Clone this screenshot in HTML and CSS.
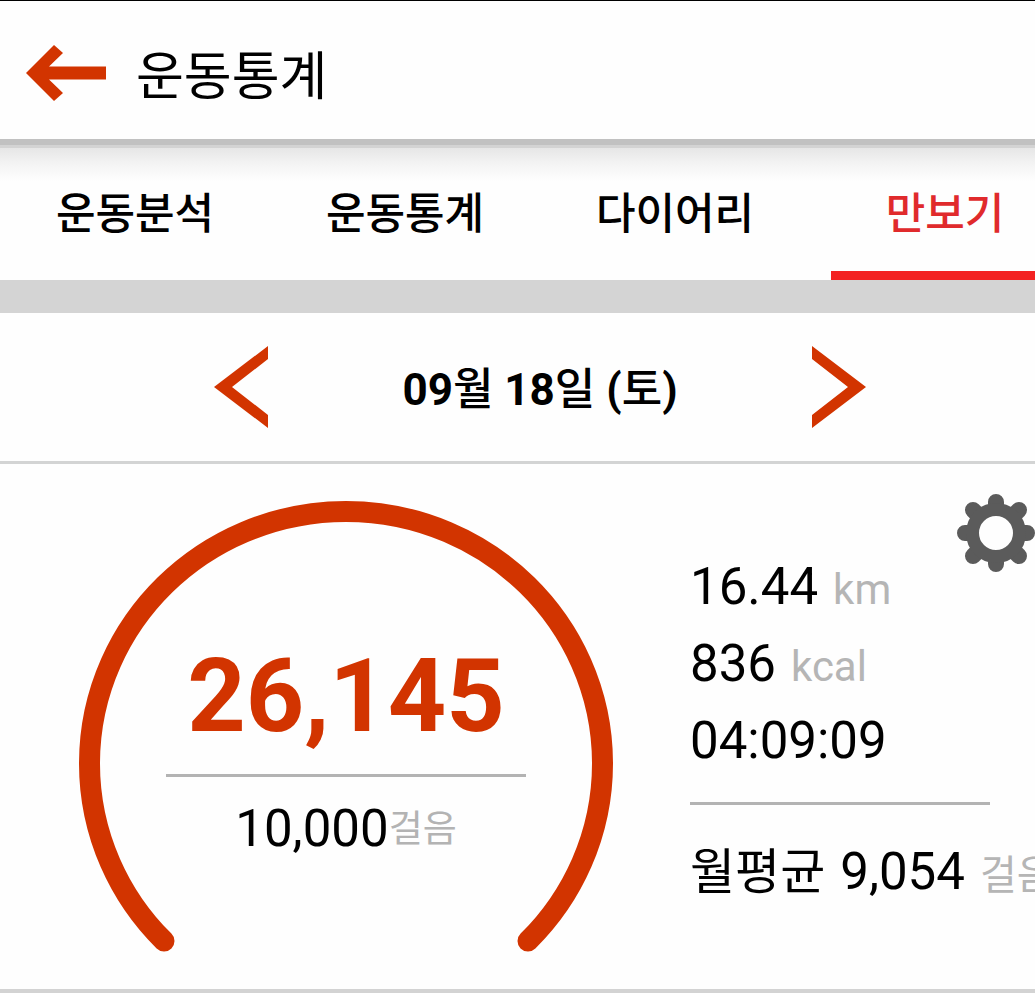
FILE: index.html
```html
<!DOCTYPE html>
<html lang="ko">
<head>
  <meta charset="UTF-8">
  <meta name="viewport" content="width=device-width, initial-scale=1.0">
  <title>운동통계</title>
  <link rel="stylesheet" href="styles.css">
</head>
<body>
<header class="header">
  <button class="icon-button" type="button" aria-label="뒤로">
    <svg width="80" height="58" viewBox="0 0 80 58">
      <path d="M0 29 28 1 37 9 23 22.500H80V35.500H23L37 49 28 57Z" fill="#d23400"/>
    </svg>
  </button>
  <h1>운동통계</h1>
</header>

<nav class="tabs">
  <a href="#analysis">운동분석</a>
  <a href="#stats">운동통계</a>
  <a href="#diary">다이어리</a>
  <a class="active" href="#pedometer">만보기</a>
</nav>

<section class="date-bar">
  <button class="icon-button" type="button" aria-label="이전 날짜">
    <svg width="54" height="82" viewBox="0 0 54 82">
      <path d="M0 41 54 0V13L18 41 54 69V82Z" fill="#d23400"/>
    </svg>
  </button>
  <h2>09<span>월</span> 18<span>일</span> (<span>토</span>)</h2>
  <button class="icon-button" type="button" aria-label="다음 날짜">
    <svg width="54" height="82" viewBox="0 0 54 82">
      <path d="M54 41 0 0V13L36 41 0 69V82Z" fill="#d23400"/>
    </svg>
  </button>
</section>

<main class="pedometer" id="pedometer">
  <div class="gauge">
    <svg class="gauge-ring" width="534" height="452" viewBox="0 0 534 452">
      <path d="M85 441A256.500 252 0 1 1 449 441" fill="none" stroke="#d23400" stroke-width="21" stroke-linecap="round"/>
    </svg>
    <div class="steps">
      <p class="steps-count">26,145</p>
      <p class="steps-goal">10,000<span>걸음</span></p>
    </div>
  </div>

  <div class="stats">
    <p>16.44 <span class="unit">km</span></p>
    <p>836 <span class="unit">kcal</span></p>
    <p>04:09:09</p>
    <p class="average"><span class="label">월평균</span> 9,054 <span class="unit">걸음</span></p>
  </div>

  <button class="icon-button settings" type="button" aria-label="설정">
    <svg width="78" height="78" viewBox="0 0 78 78">
      <path d="M39 8V14M39 64V70M8 39H14M64 39H70M16 16 20 20M58 58 62 62M62 16 58 20M20 58 16 62" stroke="#5b5b5b" stroke-width="16" stroke-linecap="round"/>
      <circle cx="39" cy="39" r="23.500" fill="none" stroke="#5b5b5b" stroke-width="13"/>
    </svg>
  </button>
</main>
</body>
</html>
```

FILE: styles.css
```css
* {
  box-sizing: border-box;
}

body {
  margin: 0;
  background-color: #fefefe;
  color: #000;
  font-family: Roboto, "Noto Sans CJK KR", sans-serif;
  overflow-x: hidden;
}

h1, h2, p {
  margin: 0;
}

.icon-button {
  padding: 0;
  border: none;
  background: none;
  cursor: pointer;
}

.icon-button svg {
  display: block;
}

/* Header */
.header {
  display: flex;
  align-items: center;
  gap: 30px;
  height: 145px;
  padding: 6px 26px 0;
  border-top: 1px solid #000;
  border-bottom: 6px solid #c1c1c1;
}

.header h1 {
  padding-top: 10px;
  font-size: 52px;
  font-weight: 400;
  line-height: 76px;
}

/* Tabs */
.tabs {
  display: flex;
  gap: 42px;
  height: 168px;
  padding-left: 21px;
  border-bottom: 33px solid #d4d4d4;
  background: linear-gradient(#d3d3d3 3px, #e6e6e6 3px, #f3f3f3 18px, #fefefe 36px);
  overflow: hidden;
}

.tabs a {
  flex: 0 0 228px;
  padding-top: 6px;
  border-bottom: 9px solid transparent;
  color: #000;
  font-size: 43px;
  font-weight: 500;
  line-height: 126px;
  text-align: center;
  text-decoration: none;
}

.tabs .active {
  border-color: #f32222;
  color: #e02a2c;
}

/* Date */
.date-bar {
  display: flex;
  align-items: center;
  justify-content: center;
  gap: 134px;
  height: 151px;
  padding-left: 45px;
  border-bottom: 3px solid #d3d4d4;
}

.date-bar h2 {
  padding-top: 5px;
  font-size: 44px;
  font-weight: 700;
  line-height: 64px;
  white-space: nowrap;
}

.date-bar h2 span {
  font-weight: 500;
}

/* Pedometer */
.pedometer {
  position: relative;
  display: flex;
  gap: 77px;
  padding: 36px 0 37px 79px;
  border-bottom: 4px solid #d3d3d3;
  overflow: hidden;
}

.gauge {
  display: grid;
  flex: none;
  justify-items: center;
}

.gauge-ring,
.steps {
  grid-area: 1 / 1;
}

.gauge-ring {
  overflow: visible;
}

.steps {
  width: 360px;
  padding-top: 134px;
  text-align: center;
}

.steps-count {
  padding-bottom: 16px;
  border-bottom: 3px solid #b3b3b3;
  color: #d23400;
  font-size: 102px;
  font-weight: 700;
  line-height: 124px;
}

.steps-goal {
  font-size: 51px;
  line-height: 104px;
}

.steps-goal span {
  color: #b3b3b3;
  font-size: 37px;
  line-height: 1;
  vertical-align: 4px;
}

.stats {
  flex: none;
  width: 300px;
  padding-top: 48px;
  font-size: 51px;
  line-height: 77px;
}

.stats p {
  display: flex;
  align-items: baseline;
  gap: 15px;
  white-space: nowrap;
}

.stats span {
  line-height: 1;
}

.stats .unit {
  color: #b5b5b5;
  font-size: 42px;
}

.stats .average {
  margin-top: 23px;
  padding-top: 28px;
  border-top: 3px solid #b3b3b3;
}

.stats .label {
  font-size: 49px;
}

.stats .average .unit {
  font-size: 40px;
}

.settings {
  position: absolute;
  top: 30px;
  right: 0;
}
```
